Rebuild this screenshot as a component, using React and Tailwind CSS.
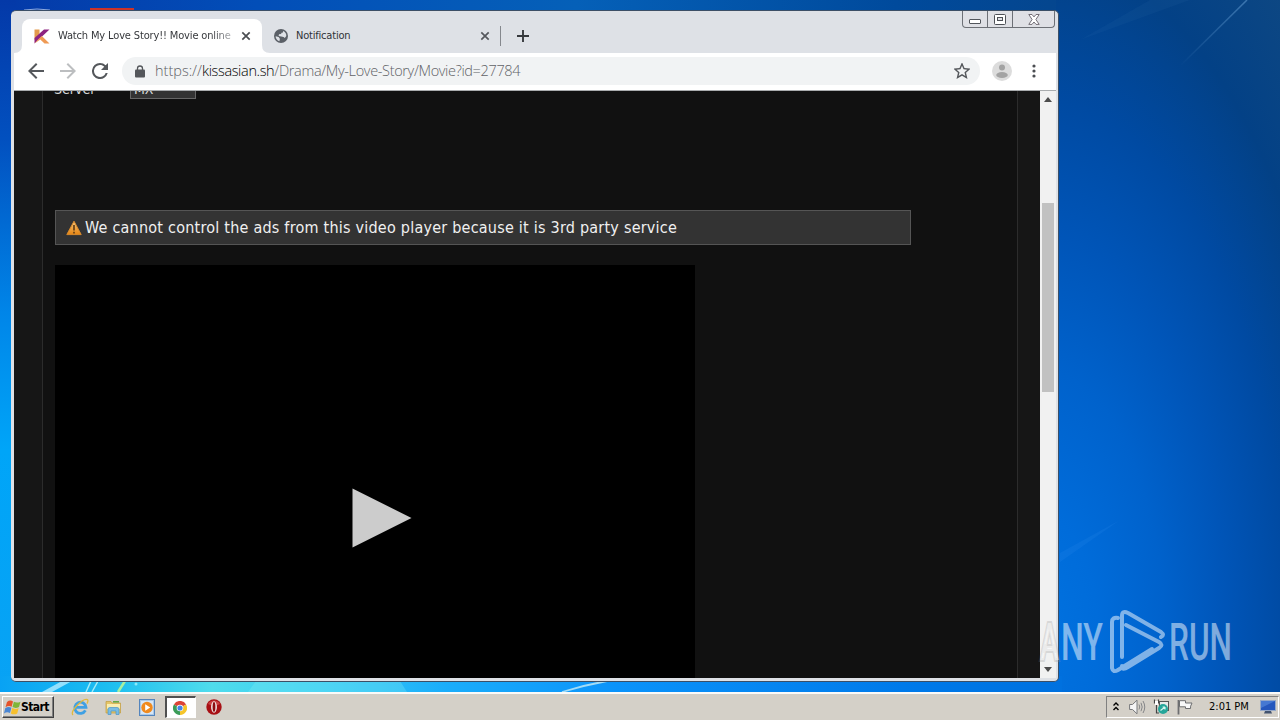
import React from "react";

const Wallpaper = () => (
  <svg className="absolute inset-0" width="1280" height="720" viewBox="0 0 1280 720">
    <defs>
      <linearGradient id="top" x1="0" x2="1" y1="0" y2="0">
        <stop offset="0" stopColor="#0439a8" />
        <stop offset="0.2" stopColor="#024eb8" />
        <stop offset="0.45" stopColor="#0560b8" />
        <stop offset="0.7" stopColor="#004a9c" />
        <stop offset="0.82" stopColor="#04468f" />
        <stop offset="1" stopColor="#0d4a85" />
      </linearGradient>
      <linearGradient id="left" x1="0" x2="0" y1="0" y2="1">
        <stop offset="0" stopColor="#0439a8" />
        <stop offset="0.2" stopColor="#0250bf" />
        <stop offset="0.45" stopColor="#0085e8" />
        <stop offset="0.65" stopColor="#00a5f8" />
        <stop offset="1" stopColor="#08a2f4" />
      </linearGradient>
      <linearGradient id="bottom" x1="0" x2="1" y1="0" y2="0">
        <stop offset="0" stopColor="#08a2f4" />
        <stop offset="0.1" stopColor="#1cbdf0" />
        <stop offset="0.2" stopColor="#50dcec" />
        <stop offset="0.3" stopColor="#38ccf4" />
        <stop offset="0.42" stopColor="#1badfa" />
        <stop offset="0.58" stopColor="#0b93fa" />
        <stop offset="0.85" stopColor="#007aea" />
        <stop offset="1" stopColor="#0071df" />
      </linearGradient>
      <radialGradient id="right" gradientUnits="userSpaceOnUse" cx="0" cy="0" r="900" gradientTransform="translate(1040 640) scale(0.46 1)">
        <stop offset="0" stopColor="#0072e0" />
        <stop offset="0.14" stopColor="#006cda" />
        <stop offset="0.3" stopColor="#0062cc" />
        <stop offset="0.45" stopColor="#0055b8" />
        <stop offset="0.6" stopColor="#004aa2" />
        <stop offset="0.76" stopColor="#034186" />
        <stop offset="0.92" stopColor="#0d4783" />
        <stop offset="1" stopColor="#0f4a84" />
      </radialGradient>
      <linearGradient id="ray" x1="0" x2="1" y1="1" y2="0">
        <stop offset="0" stopColor="#6fa8dc" stopOpacity="0" />
        <stop offset="1" stopColor="#6fa8dc" stopOpacity="0.5" />
      </linearGradient>
    </defs>
    <rect width="1280" height="720" fill="url(#top)" />
    <rect width="16" height="692" fill="url(#left)" />
    <rect x="1056" width="224" height="692" fill="url(#right)" />
    <rect y="676" width="1062" height="16" fill="url(#bottom)" />
    <path d="M1180 66 L1247 0" stroke="url(#ray)" strokeWidth="1.5" />
    <path d="M1080 40 L1150 0 L1190 0 Z" fill="#5f9bd0" opacity="0.06" />
    <path d="M1060 553 L1120 520 L1060 562 Z" fill="#3fa0f5" opacity="0.12" />
    <path d="M42 692 L62 681 L72 681 L52 692 Z" fill="#b4ecff" opacity="0.8" />
    <path d="M86 692 L91 681 M92 692 L98 681" stroke="#a2ecf8" strokeWidth="1.5" />
    <path d="M118 692 L125 681" stroke="#a9f0a0" strokeWidth="2.5" />
    <circle cx="136" cy="684" r="1.5" fill="#8be8fa" />
    <path d="M248 692 L256 681 L400 681 L407 692 Z" fill="#86eef2" opacity="0.3" />
    <path d="M562 692 Q585 685 607 681" stroke="#a4dcf6" strokeWidth="1.8" fill="none" />
    {/* desktop icons peeking out behind the window */}
    <path d="M24 10 Q37 8 50 10" stroke="#8ea9dc" fill="none" />
    <rect x="90" y="8" width="44" height="3" fill="#cd3328" />
  </svg>
);

const Globe = () => (
  <svg width="14" height="14" viewBox="0 0 14 14">
    <circle cx="7" cy="7" r="7" fill="#5b6067" />
    <path d="M1.6 7.2 L4.6 8 L5.9 9.8 L5.4 12.2 Q1.8 10.8 1.6 7.2 Z" fill="#dee1e6" />
    <path d="M9 2 Q12.4 3.3 12.3 7 L10.8 9 L9.6 8 L7.2 7.5 L4.6 7 L5 5.3 L7 5 L7.6 3.8 L9 3.4 Z" fill="#dee1e6" />
  </svg>
);

const CloseX = ({ color = "#4b4e52" }) => (
  <svg width="10" height="10" viewBox="0 0 10 10">
    <path d="M1.3 1.3 L8.7 8.7 M8.7 1.3 L1.3 8.7" stroke={color} strokeWidth="1.7" />
  </svg>
);

const CaptionButtons = () => (
  <div className="flex h-[17px] w-[93px] rounded-b-[4px] border border-t-0 border-[#6d7076] bg-[#dfe0e5]">
    <div className="w-[25px] border-r border-[#6d7076] pl-[6px] pt-[8px]">
      <div className="h-[5px] w-[12px] rounded-[1px] border border-[#53565c] bg-white"></div>
    </div>
    <div className="w-[25px] border-r border-[#6d7076] pl-[6px] pt-[3px]">
      <svg width="12" height="11" viewBox="0 0 12 11">
        <rect x="0.5" y="0.5" width="11" height="10" rx="1" fill="#fff" stroke="#4d5056" />
        <rect x="3.5" y="3.5" width="5" height="3" fill="#dfe0e5" stroke="#4d5056" />
      </svg>
    </div>
    <div className="flex-1 pl-[15px] pt-[3px]">
      <svg width="12" height="11" viewBox="0 0 12 11">
        <path d="M0.8 0.5 H4 L6 2.9 L8 0.5 H11.2 L7.9 5.5 L11.2 10.4 H8 L6 8 L4 10.4 H0.8 L4.1 5.5 Z" fill="#fff" stroke="#66616a" strokeWidth="0.9" />
      </svg>
    </div>
  </div>
);

const TabStrip = () => (
  <div className="flex h-[42px] w-full items-start justify-between">
    <div className="flex h-[42px] items-end pl-[3px]">
      <svg width="8" height="8" viewBox="0 0 8 8">
        <path d="M8 0 Q8 8 0 8 H8 Z" fill="#fff" />
      </svg>
      <div className="flex h-[34px] w-[240px] items-center rounded-t-lg bg-white pl-[12px]">
        <svg width="16" height="15" viewBox="0 0 16 15">
          <path d="M0.5 0.5 H5.5 V6 L0.5 11 Z" fill="#e39a4d" />
          <path d="M0.5 9 L10 0.5 H15.5 L0.5 14.5 Z" fill="#8d2380" />
          <path d="M4 10.5 L7.8 7 L15.5 14.5 H10.5 L6.3 10.6 L0.5 14.5 Z" fill="#ef9a55" />
        </svg>
        <div className="ml-[8px] mt-px w-[174px] overflow-hidden whitespace-nowrap bg-linear-to-r from-[#303236] from-88% to-[#b8babd] to-100% bg-clip-text font-['DejaVu_Sans_Condensed','DejaVu_Sans',sans-serif] text-[11px] tracking-[-0.15px] text-transparent">
          Watch My Love Story!! Movie online
        </div>
        <div className="ml-[9px]">
          <CloseX />
        </div>
      </div>
      <svg width="8" height="8" viewBox="0 0 8 8">
        <path d="M0 0 Q0 8 8 8 H0 Z" fill="#fff" />
      </svg>
      <div className="flex h-[34px] w-[230px] items-center pl-[4px]">
        <Globe />
        <div className="ml-[8px] mt-px w-[184px] font-['DejaVu_Sans_Condensed','DejaVu_Sans',sans-serif] text-[11px] tracking-[-0.2px] text-[#303236]">
          Notification
        </div>
        <CloseX color="#55585d" />
      </div>
      <div className="mb-[7px] h-[20px] w-px bg-[#85888d]"></div>
      <svg className="mb-[11px] ml-[16px]" width="12" height="12" viewBox="0 0 12 12">
        <path d="M6 0 V12 M0 6 H12" stroke="#36393d" strokeWidth="1.9" />
      </svg>
    </div>
    <div className="pr-[3px]">
      <CaptionButtons />
    </div>
  </div>
);

const Toolbar = () => (
  <div className="flex h-[38px] items-center border-b border-[#a9acae] bg-white pb-px pl-[14px]">
    <svg width="16" height="16" viewBox="4 4 16 16">
      <path d="M20 11H7.83l5.59-5.59L12 4l-8 8 8 8 1.41-1.41L7.83 13H20v-2z" fill="#55585c" />
    </svg>
    <svg className="ml-[16px]" width="16" height="16" viewBox="4 4 16 16">
      <path d="M12 4l-1.41 1.41L16.17 11H4v2h12.17l-5.58 5.59L12 20l8-8z" fill="#bcbec0" />
    </svg>
    <svg className="ml-[16px]" width="16" height="16" viewBox="4 4 16 16">
      <path d="M17.65 6.35A7.958 7.958 0 0 0 12 4a8 8 0 1 0 7.73 10h-2.08A6 6 0 1 1 12 6c1.66 0 3.14.69 4.22 1.78L13 11h7V4l-2.35 2.35z" fill="#55585c" />
    </svg>
    <div className="ml-[14px] flex h-[28px] w-[858px] items-center rounded-full bg-[#f1f3f4] pl-[13px]">
      <svg width="10" height="13" viewBox="0 0 10 13">
        <path d="M2.5 5 V3.5 a2.5 2.5 0 0 1 5 0 V5" fill="none" stroke="#54575b" strokeWidth="1.3" />
        <rect y="4.5" width="10" height="8" rx="1" fill="#54575b" />
      </svg>
      <div className="ml-[10px] w-[799px] whitespace-nowrap font-['Open_Sans','Noto_Sans',sans-serif] text-[14.5px] font-light leading-[20px] tracking-[-0.35px] text-[#5f6266]">
        <span className="tracking-[0px]">https://</span>
        <span className="text-[#000000]">kissasian.sh</span>/Drama/My-Love-Story/Movie?id=27784
      </div>
      <svg width="16" height="16" viewBox="3 3 18 18">
        <path d="M22 9.24l-7.19-.62L12 2 9.19 8.63 2 9.24l5.46 4.73L5.82 21 12 17.27 18.18 21l-1.63-7.03L22 9.24zM12 15.4l-3.76 2.27 1-4.28-3.32-2.88 4.38-.38L12 6.1l1.71 4.04 4.38.38-3.32 2.88 1 4.28L12 15.4z" fill="#55585c" />
      </svg>
    </div>
    <svg className="ml-[12px]" width="20" height="20" viewBox="0 0 20 20">
      <circle cx="10" cy="10" r="10" fill="#dcdcdc" />
      <circle cx="10" cy="6.4" r="3" fill="#a3a3a3" />
      <ellipse cx="10" cy="14" rx="5.8" ry="3" fill="#a3a3a3" />
    </svg>
    <svg className="ml-[20px]" width="4" height="14" viewBox="0 0 4 14">
      <circle cx="2" cy="2" r="1.6" fill="#4b4e52" />
      <circle cx="2" cy="7" r="1.6" fill="#4b4e52" />
      <circle cx="2" cy="12" r="1.6" fill="#4b4e52" />
    </svg>
  </div>
);

const Warning = () => (
  <svg width="16" height="16" viewBox="0 0 16 16">
    <defs>
      <linearGradient id="warn" x1="0" x2="0" y1="0" y2="1">
        <stop offset="0" stopColor="#f7c77c" />
        <stop offset="1" stopColor="#e58411" />
      </linearGradient>
    </defs>
    <path d="M8 1.2 L15.2 14.6 H0.8 Z" fill="url(#warn)" stroke="#d98a2b" strokeWidth="1" strokeLinejoin="round" />
    <path d="M8 5 V10.5 M8 11.8 V13.4" stroke="#6b4518" strokeWidth="1.8" />
  </svg>
);

const MoviePage = () => (
  <div className="flex h-[587px] w-[1026px] overflow-hidden bg-[#161616] pl-[28px]">
    <div className="h-full w-[976px] overflow-hidden border-x border-[#2c2c2c] bg-[#111111] pl-[11px] font-['DejaVu_Sans_Condensed','DejaVu_Sans',sans-serif]">
      {/* scrolled half out of view */}
      <div className="-mt-[11px] flex h-[19px] items-start text-[14px] leading-[18px] text-[#d8d8d8]">
        <div className="w-[76px]">Server</div>
        <div className="h-[19px] w-[66px] border border-[#666666] bg-[#333333] pl-[3px] leading-[16px]">MX</div>
      </div>
      <div className="ml-px mt-[111px] flex h-[35px] w-[856px] items-center border border-[#555555] bg-[#333333] pl-[10px] text-[#f0f0f0]">
        <Warning />
        <span className="ml-[3px] whitespace-nowrap text-[16px] tracking-[0.23px]">
          We cannot control the ads from this video player because it is 3rd party service
        </span>
      </div>
      <div className="ml-px mt-[20px] h-[420px] w-[640px] bg-black pl-[297px] pt-[223px]">
        <svg width="60" height="60" viewBox="0 0 60 60">
          <path d="M0.5 0.5 L59.5 30 L0.5 59.5 Z" fill="#cccccc" />
        </svg>
      </div>
    </div>
  </div>
);

const Scrollbar = () => (
  <div className="flex h-[587px] w-[16px] flex-col items-center bg-[#f1f1f1]">
    <svg className="mt-[6px]" width="8" height="5" viewBox="0 0 8 5">
      <path d="M4 0 L8 5 H0 Z" fill="#4b4b4b" />
    </svg>
    <div className="mt-[101px] h-[189px] w-[12px] bg-[#c1c1c1]"></div>
    <svg className="mt-[275px]" width="8" height="5" viewBox="0 0 8 5">
      <path d="M4 5 L8 0 H0 Z" fill="#4b4b4b" />
    </svg>
  </div>
);

const BrowserWindow = () => (
  <div className="absolute left-[11px] top-[10px] h-[672px] w-[1048px] overflow-hidden rounded-[5px] border-b border-r border-t border-[#3c4f66] bg-[#dee1e6]">
    <TabStrip />
    <div className="ml-[3px] w-[1042px]">
      <Toolbar />
      <div className="flex">
        <MoviePage />
        <Scrollbar />
      </div>
    </div>
  </div>
);

const Watermark = () => (
  <svg className="absolute left-[1030px] top-[600px]" width="240" height="80" viewBox="0 0 240 80">
    <g fill="#ffffff" fillOpacity="0.5" fontFamily="Roboto, sans-serif" fontSize="52" fontWeight="500">
      <text x="10" y="60" textLength="19" lengthAdjust="spacingAndGlyphs" stroke="#8c8c8c" strokeOpacity="0.25" strokeWidth="4" paintOrder="stroke">A</text>
      <text x="31" y="60" textLength="42" lengthAdjust="spacingAndGlyphs">NY</text>
      <text x="139" y="60" textLength="63" lengthAdjust="spacingAndGlyphs">RUN</text>
    </g>
    <g fill="none" stroke="#ffffff" opacity="0.5" strokeWidth="4" strokeLinejoin="round" strokeLinecap="round">
      <path d="M88 18 Q82 17 82 22 V68 Q83 73 88 70 L122 49" />
      <path d="M92 57 V16 Q92 10 98 13 L131 32 Q135 35 131 37" />
      <path d="M96 25 L129 42 Q134 45 129 48 L98 67 Q92 71 92 66" />
    </g>
  </svg>
);

const StartFlag = () => (
  <svg width="17" height="17" viewBox="0 0 17 17">
    <path d="M3 3 Q6 0.5 9 2.4 L7.6 7.7 Q4.6 6.2 1.5 8.3 Z" fill="#e5532b" />
    <path d="M9.9 2.8 Q13 4.4 16.5 2.7 L15 8 Q11.6 9.7 8.5 8.1 Z" fill="#7fb539" />
    <path d="M1.2 9.2 Q4.4 7 7.4 8.8 L6 14 Q3 12.2 0 14.4 Z" fill="#4a86d3" />
    <path d="M8.2 9.1 Q11.5 10.7 14.7 9 L13.2 14.4 Q10 16.2 6.8 14.4 Z" fill="#f7c02e" />
  </svg>
);

const InternetExplorer = () => (
  <svg width="18" height="18" viewBox="0 0 18 18">
    <path d="M14.4 12.4 A5.6 5.6 0 1 1 15 9.4 H5" fill="none" stroke="#3fa0e3" strokeWidth="2.8" />
    <path d="M2 17 C-1.5 13.5 12 -0.5 16.4 1.6 Q17.6 2.6 16 5.6" fill="none" stroke="#e0b93d" strokeWidth="1.3" />
  </svg>
);

const Explorer = () => (
  <svg width="17" height="17" viewBox="0 0 17 17">
    <path d="M1 2.5 H6 L7 4 H15.5 V14 H1 Z" fill="#e4c568" stroke="#c29c3e" strokeWidth="0.7" />
    <rect x="2" y="5" width="13" height="5" fill="#f9edb2" />
    <rect x="8" y="2" width="6" height="1.6" fill="#65a844" />
    <path d="M3 15.5 V10 Q3 8.5 5 8.5 H12 Q14 8.5 14 10 V15.5 H11 V12 H6 V15.5 Z" fill="#79bce4" stroke="#4b95c7" strokeWidth="0.7" />
  </svg>
);

const MediaPlayer = () => (
  <svg width="16" height="17" viewBox="0 0 16 17">
    <rect x="0.5" y="0.5" width="15" height="16" fill="#aac9e8" stroke="#5485bd" />
    <rect x="2" y="2" width="12" height="13" fill="#d7e7f6" />
    <circle cx="8" cy="8.5" r="5.7" fill="#f08a1d" />
    <path d="M6.2 5.3 L11.2 8.5 L6.2 11.7 Z" fill="#fff" />
  </svg>
);

const ChromeLogo = () => (
  <svg width="14" height="14" viewBox="0 0 14 14">
    <path d="M7 7 L0.9 3.5 A7 7 0 0 1 13.1 3.5 Z" fill="#dc4437" />
    <path d="M7 7 L13.1 3.5 A7 7 0 0 1 7 14 Z" fill="#f5c52a" />
    <path d="M7 7 L7 14 A7 7 0 0 1 0.9 3.5 Z" fill="#3b9c58" />
    <circle cx="7" cy="7" r="3.3" fill="#fff" />
    <circle cx="7" cy="7" r="2.6" fill="#4484e8" />
  </svg>
);

const Opera = () => (
  <svg width="16" height="16" viewBox="0 0 16 16">
    <circle cx="8" cy="8" r="7.7" fill="#a81015" />
    <path d="M2 5 A7 7 0 0 1 14 5 Q8 8 2 5 Z" fill="#e26464" opacity="0.6" />
    <ellipse cx="8" cy="8" rx="2.9" ry="5.8" fill="#f3eeee" />
    <ellipse cx="8" cy="8" rx="1.4" ry="4.9" fill="#8d0c10" />
  </svg>
);

const Tray = () => (
  <div className="flex h-[22px] w-[173px] items-center border border-b-white border-l-[#808080] border-r-white border-t-[#808080] pl-[6px]">
    <svg className="mb-[2px]" width="6" height="9" viewBox="0 0 6 9">
      <path d="M0.5 3.5 L3 1 L5.5 3.5 M0.5 8 L3 5.5 L5.5 8" fill="none" stroke="#000" strokeWidth="1.4" />
    </svg>
    <svg className="ml-[10px]" width="17" height="16" viewBox="0 0 17 16">
      <path d="M0.6 5.5 H3.5 L8 1.2 V14.8 L3.5 10.5 H0.6 Z" fill="#f5f5f5" stroke="#77787a" />
      <path d="M10 5.5 Q11.5 8 10 10.5 M12 3.8 Q14.4 8 12 12.2 M14 2 Q17.5 8 14 14" fill="none" stroke="#858688" />
    </svg>
    <svg className="ml-[7px]" width="17" height="16" viewBox="0 0 17 16">
      <path d="M1.5 0.5 V4 H5.5 V0.5 M3.5 4 V14 H6" fill="none" stroke="#444" strokeWidth="1.2" />
      <rect x="6.5" y="2.5" width="9" height="9" fill="#e7e9e9" stroke="#555" />
      <rect x="2" y="2" width="3" height="4" fill="#fff" />
      <circle cx="10" cy="10" r="5" fill="#26a69a" />
      <path d="M7.5 11.5 L12 8 M12 8 H9.6 M12 8 V10.5" stroke="#d6f5f0" strokeWidth="1.2" />
    </svg>
    <svg className="ml-[7px]" width="17" height="16" viewBox="0 0 17 16">
      <path d="M1.5 1 V15.5" stroke="#6d6e70" strokeWidth="1.8" />
      <path d="M2.5 1.7 H8.5 V4 H15 Q13 7.5 13.5 9.5 H8.5 V7.8 H2.5 Z" fill="#f8f8f8" stroke="#6d6e70" />
    </svg>
    <div className="ml-[15px] mt-px w-[51px] whitespace-nowrap font-['DejaVu_Sans_Condensed','DejaVu_Sans',sans-serif] text-[11px] tracking-[0px] text-black">
      2:01 PM
    </div>
    <svg width="16" height="14" viewBox="0 0 16 14">
      <rect x="0.5" y="0.5" width="15" height="10" fill="#2557bd" stroke="#95a8c8" />
      <path d="M1 1 H15 L1 8 Z" fill="#5b8de0" opacity="0.6" />
      <path d="M5 11 H11 L12 13.5 H4 Z" fill="#42536e" />
    </svg>
  </div>
);

const Taskbar = () => (
  <div className="relative flex h-[28px] items-start border-t-2 border-[#fbfaf8] bg-[#d4d0c8] pt-[2px]">
    <div className="ml-[2px] flex h-[22px] w-[52px] items-center border border-b-[#404040] border-l-white border-r-[#404040] border-t-white pl-px shadow-[inset_-1px_-1px_0_#808080]">
      <StartFlag />
      <span className="font-['DejaVu_Sans_Condensed','DejaVu_Sans',sans-serif] text-[12px] font-bold tracking-[-0.6px] text-black">Start</span>
    </div>
    <div className="ml-[17px] flex h-[22px] items-center">
      <InternetExplorer />
      <div className="ml-[16px]">
        <Explorer />
      </div>
      <div className="ml-[17px]">
        <MediaPlayer />
      </div>
      <div className="ml-[10px] flex h-[22px] w-[31px] items-center justify-center border-b border-l-2 border-r border-t-2 border-b-white border-l-[#505050] border-r-white border-t-[#505050] bg-white pr-[3px]">
        <ChromeLogo />
      </div>
      <div className="ml-[10px]">
        <Opera />
      </div>
    </div>
    <div className="ml-auto mr-px">
      <Tray />
    </div>
  </div>
);

const App = () => {
  return (
    <div className="relative flex h-[720px] w-[1280px] flex-col justify-end overflow-hidden bg-[#0052b4]">
      <Wallpaper />
      <BrowserWindow />
      <Watermark />
      <Taskbar />
    </div>
  );
};

export default App;
